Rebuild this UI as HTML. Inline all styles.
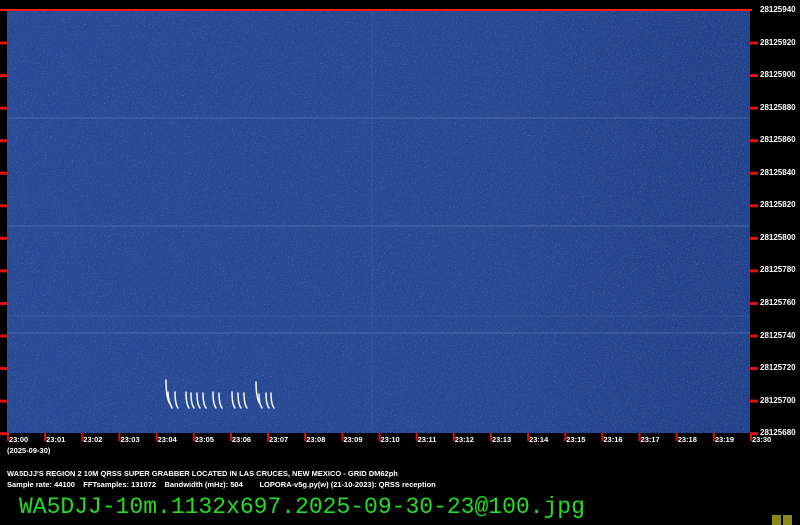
<!DOCTYPE html>
<html><head><meta charset="utf-8"><style>
html,body{margin:0;padding:0;background:#000;width:800px;height:525px;overflow:hidden;position:relative;font-family:"Liberation Sans",sans-serif}
.t{position:absolute;color:#fff;font-weight:bold;font-size:7.5px;line-height:9px;white-space:nowrap}
.f{position:absolute;left:760px;color:#fff;font-weight:bold;font-size:8px;line-height:9px}
</style></head><body>
<svg width="800" height="525" style="position:absolute;left:0;top:0">
<defs>
<filter id="n" x="0" y="0" width="100%" height="100%">
<feTurbulence type="fractalNoise" baseFrequency="0.9" numOctaves="1" seed="3" result="t"/>
<feColorMatrix in="t" type="matrix" values="0 0 0 0 0.35  0 0 0 0 0.5  0 0 0 0 0.85  2.0 0 0 0 -1.15"/>
</filter>
<filter id="n2" x="0" y="0" width="100%" height="100%">
<feTurbulence type="fractalNoise" baseFrequency="0.85" numOctaves="1" seed="9" result="t"/>
<feColorMatrix in="t" type="matrix" values="0 0 0 0 0.02  0 0 0 0 0.08  0 0 0 0 0.35  0 2.6 0 0 -1.0"/>
</filter>
<linearGradient id="g" x1="0" x2="1" y1="0" y2="0">
<stop offset="0" stop-color="#2a4890"/><stop offset="0.65" stop-color="#28458a"/><stop offset="1" stop-color="#223c80"/>
</linearGradient>
</defs>
<rect x="7" y="11" width="743" height="422" fill="url(#g)"/>
<rect x="7" y="11" width="743" height="422" filter="url(#n)"/>
<rect x="7" y="11" width="743" height="422" filter="url(#n2)"/>
<g stroke="#8fa8d8" stroke-width="1" opacity="0.35">
<line x1="7" y1="118" x2="750" y2="118"/><line x1="7" y1="226" x2="750" y2="226"/><line x1="7" y1="333" x2="750" y2="333"/><line x1="7" y1="316" x2="750" y2="316" opacity="0.5"/>
<line x1="372" y1="11" x2="372" y2="433" opacity="0.4"/>
</g>
<g stroke="#f4f8ff" stroke-width="1.5" fill="none" stroke-linecap="round">
<path d="M166 380 Q166 398 170 404"/><path d="M168 392 Q168 400 172 408"/>
<path d="M175 392 Q175 404 178 408"/><path d="M186 392 Q186 404 189 408"/>
<path d="M191 393 Q191 404 194 408"/><path d="M197 393 Q197 404 200 408"/>
<path d="M203 393 Q203 404 206 408"/><path d="M213 392 Q213 404 216 408"/>
<path d="M219 393 Q219 404 222 408"/><path d="M232 392 Q232 404 235 408"/>
<path d="M238 393 Q238 404 241 408"/><path d="M244 393 Q244 404 247 408"/>
<path d="M256 382 Q256 398 260 404"/><path d="M259 394 Q259 404 262 408"/>
<path d="M266 393 Q266 404 269 408"/><path d="M271 393 Q271 404 274 408"/>
</g>
<rect x="0" y="9" width="752" height="2" fill="#ff1a1a"/>
<g fill="#e01010" id="ticks"></g>
<rect x="772" y="515" width="9" height="10" fill="#8a8a1a"/><rect x="783" y="515" width="9" height="10" fill="#8a8a1a"/>
</svg>
<div id="labels"></div>
<div class="t" style="left:7px;top:446px">(2025-09-30)</div>
<div class="t" style="left:7px;top:469px">WA5DJJ'S REGION 2 10M QRSS SUPER GRABBER LOCATED IN LAS CRUCES, NEW MEXICO - GRID DM62ph</div>
<div class="t" style="left:7px;top:480px">Sample rate: 44100&nbsp;&nbsp;&nbsp;&nbsp;FFTsamples: 131072&nbsp;&nbsp;&nbsp;&nbsp;Bandwidth (mHz): 504&nbsp;&nbsp;&nbsp;&nbsp;&nbsp;&nbsp;&nbsp;&nbsp;LOPORA-v5g.py(w) (21-10-2023): QRSS reception</div>
<div style="position:absolute;left:19px;top:494px;color:#22dd22;font-family:'Liberation Mono',monospace;font-size:23px;line-height:26px;white-space:nowrap">WA5DJJ-10m.1132x697.2025-09-30-23@100.jpg</div>
<script>
var g=document.getElementById('ticks'),L=document.getElementById('labels'),h='',s='';
var fr=[940,920,900,880,860,840,820,800,780,760,740,720,700,680];
for(var i=0;i<14;i++){var y=10+i*32.55;
 if(i>0){s+='<rect x="0" y="'+(y-1)+'" width="8" height="3"/><rect x="750" y="'+(y-1)+'" width="8" height="3"/>';}
 h+='<div class="f" style="top:'+(y-5)+'px">28125'+fr[i]+'</div>';}
for(var j=0;j<21;j++){var x=7+j*37.15;var m=(j==20?'30':String(j).padStart(2,'0'));
 s+='<rect x="'+x+'" y="433" width="2" height="8"/>';
 h+='<div class="t" style="left:'+(x+2)+'px;top:435px">23:'+m+'</div>';}
g.innerHTML=s;L.innerHTML=h;
</script>
</body></html>
